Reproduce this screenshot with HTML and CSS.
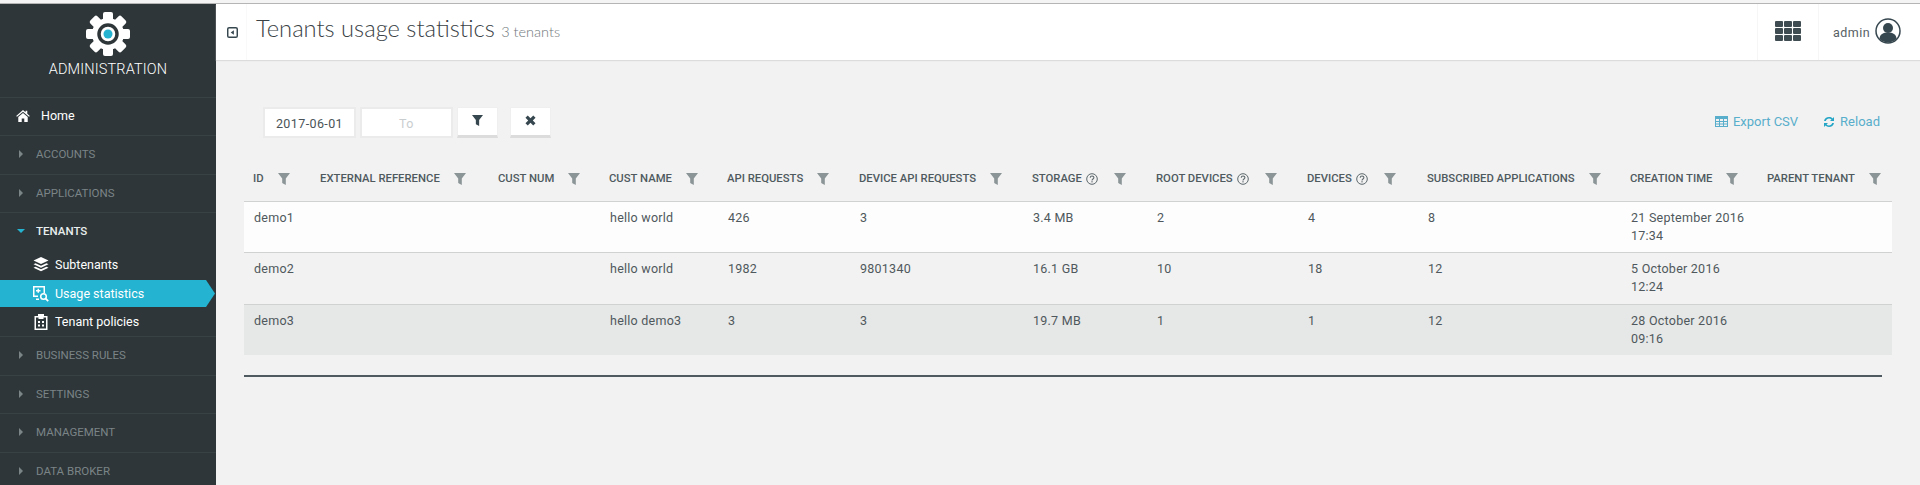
FILE: index.html
```html
<!DOCTYPE html>
<html lang="en">
<head>
    <meta charset="UTF-8">
    <title>Tenants usage statistics</title>
    <link rel="stylesheet" href="styles.css">
</head>
<body>
    <svg class="icon-defs" width="0" height="0">
        <symbol id="i-filter" viewBox="0 0 12 12"><path d="M0 0h12L7.800 5.500V12L4.200 10V5.500z"/></symbol>
        <symbol id="i-help" viewBox="0 0 12 12"><circle cx="6" cy="6" r="5.300" fill="none" stroke="currentColor"/><path d="M4.200 4.700C4.300 2.600 7.900 2.500 7.900 4.600C7.900 6 6 5.900 6 7.400" fill="none" stroke="currentColor" stroke-width="1.100"/><rect x="5.400" y="8.200" width="1.200" height="1.200"/></symbol>
        <symbol id="i-arrow" viewBox="0 0 6 8"><path d="M1 0l4 4-4 4z"/></symbol>
    </svg>
    <div class="top-strip"></div>
    <div class="app">
        <aside class="sidebar">
            <div class="brand">
                <svg class="brand-icon" viewBox="0 0 44 44">
                    <g fill="#fff">
                        <circle cx="22" cy="22" r="16"/>
                        <rect x="17" y="0" width="10" height="44" rx="2"/>
                        <rect x="17" y="0" width="10" height="44" rx="2" transform="rotate(45 22 22)"/>
                        <rect x="17" y="0" width="10" height="44" rx="2" transform="rotate(90 22 22)"/>
                        <rect x="17" y="0" width="10" height="44" rx="2" transform="rotate(135 22 22)"/>
                    </g>
                    <circle cx="22" cy="22" r="9" fill="#fff" stroke="#2e3639" stroke-width="3.500"/>
                    <circle cx="22" cy="22" r="4.500" fill="#24b3d0"/>
                </svg>
                <div class="brand-name">ADMINISTRATION</div>
            </div>
            <a class="nav-home">
                <svg class="nav-home-icon" viewBox="0 0 16 14"><path d="M8 0L0 7l1 1 7-6 7 6 1-1-3-2.600V1h-2v1.700zM2.500 8.200V14h4v-4h3v4h4V8.200L8 3.500z"/></svg>
                Home
            </a>
            <a class="nav-group"><svg class="arrow"><use href="#i-arrow"/></svg>ACCOUNTS</a>
            <a class="nav-group"><svg class="arrow"><use href="#i-arrow"/></svg>APPLICATIONS</a>
            <div class="nav-section">
                <a class="nav-group open"><svg class="arrow-down" viewBox="0 0 8 6"><path d="M0 1h8L4 5z"/></svg>TENANTS</a>
                <a class="nav-sub first">
                    <svg class="sub-icon" viewBox="0 0 16 16"><path d="M8 0l7.500 3.500L8 7 .5 3.500zM2.500 6.200L8 8.700l5.500-2.500 2 1L8 10.700.5 7.200zM2.500 9.700L8 12.200l5.500-2.500 2 1L8 14.200.5 10.700z"/></svg>
                    Subtenants
                </a>
                <a class="nav-sub active">
                    <svg class="sub-icon" viewBox="0 0 16 16"><path d="M0 0h12v7h-1.500V1.500h-9v8H5V11H0z"/><path d="M3 4h1.500V2.700H6V4h1.500v1.400H6v1.400H4.500V5.400H3z"/><circle cx="10.500" cy="10.500" r="2.800" fill="none" stroke="#fff" stroke-width="1.500"/><path d="M12.400 12.400l2.800 2.800" stroke="#fff" stroke-width="1.800"/><path d="M3 12.500h3v1.500H3z"/></svg>
                    Usage statistics
                </a>
                <a class="nav-sub">
                    <svg class="sub-icon" viewBox="0 0 16 16"><path fill-rule="evenodd" d="M1.500 2H5V0h6v2h3.500v14h-13zM3 3.500v11h10v-11h-2.500V5h-5V3.500z"/><path d="M5 7h2v2H5zM9 7h2v2H9zM5 10.500h2v2H5zM9 10.500h2v2H9z"/></svg>
                    Tenant policies
                </a>
            </div>
            <a class="nav-group"><svg class="arrow"><use href="#i-arrow"/></svg>BUSINESS RULES</a>
            <a class="nav-group"><svg class="arrow"><use href="#i-arrow"/></svg>SETTINGS</a>
            <a class="nav-group"><svg class="arrow"><use href="#i-arrow"/></svg>MANAGEMENT</a>
            <a class="nav-group"><svg class="arrow"><use href="#i-arrow"/></svg>DATA BROKER</a>
        </aside>

        <main class="content">
            <header class="page-header">
                <div class="toggle-cell">
                    <svg class="toggle-icon" viewBox="0 0 12 12"><rect x=".8" y=".8" width="10.400" height="10.400" rx="1.500" fill="none" stroke="#37474f" stroke-width="1.600"/><path d="M7.500 3.500v5L4 6z" fill="#37474f"/></svg>
                </div>
                <h1 class="page-title">Tenants usage statistics <small>3 tenants</small></h1>
                <div class="apps-cell">
                    <svg class="apps-icon" viewBox="0 0 26 20">
                        <rect width="8" height="6" rx="1"/><rect x="9" width="8" height="6" rx="1"/><rect x="18" width="8" height="6" rx="1"/>
                        <rect y="7" width="8" height="6" rx="1"/><rect x="9" y="7" width="8" height="6" rx="1"/><rect x="18" y="7" width="8" height="6" rx="1"/>
                        <rect y="14" width="8" height="6" rx="1"/><rect x="9" y="14" width="8" height="6" rx="1"/><rect x="18" y="14" width="8" height="6" rx="1"/>
                    </svg>
                </div>
                <div class="user-cell">
                    <span class="user-name">admin</span>
                    <svg class="avatar" viewBox="0 0 26 26">
                        <circle cx="13" cy="13" r="12" fill="#fff" stroke="#37474f" stroke-width="1.500"/>
                        <circle cx="13" cy="10" r="5" fill="#37474f"/>
                        <path d="M4.500 21c0-5 4-6.500 8.500-6.500s8.500 1.500 8.500 6.500c-4.500 4.500-12.500 4.500-17 0z" fill="#37474f"/>
                    </svg>
                </div>
            </header>

            <div class="toolbar">
                <div class="date-field">2017-06-01</div>
                <div class="date-field empty">To</div>
                <button class="tool-btn"><svg class="tool-icon"><use href="#i-filter"/></svg></button>
                <button class="tool-btn clear"><svg class="tool-icon" viewBox="0 0 12 12"><path d="M3 .5L6 3.500 9 .5 11.500 3 8.500 6 11.500 9 9 11.500 6 8.500 3 11.500 .5 9 3.500 6 .5 3z"/></svg></button>
                <div class="toolbar-links">
                    <a class="tool-link">
                        <svg class="link-icon" viewBox="0 0 13 11"><path fill-rule="evenodd" d="M0 0h13v11H0zM1 3v2h3V3zM5 3v2h3V3zM9 3v2h3V3zM1 6v1.500h3V6zM5 6v1.500h3V6zM9 6v1.500h3V6zM1 8.500V10h3V8.500zM5 8.500V10h3V8.500zM9 8.500V10h3V8.500z"/></svg>
                        Export CSV
                    </a>
                    <a class="tool-link">
                        <svg class="link-icon reload" viewBox="0 0 12 12"><path d="M1 5C1.500 2.500 3.500 1 6 1c1.500 0 2.700.5 3.500 1.400L11 1v4H7l1.500-1.500C7.900 3 7 2.600 6 2.600c-1.500 0-2.800 1-3.200 2.400zM11 7c-.5 2.500-2.500 4-5 4-1.500 0-2.700-.5-3.500-1.400L1 11V7h4L3.500 8.500C4.100 9 5 9.400 6 9.400c1.500 0 2.800-1 3.200-2.400z"/></svg>
                        Reload
                    </a>
                </div>
            </div>

            <table class="stats-table">
                <thead>
                    <tr>
                        <th><span class="th-inner"><span class="th-label">ID</span><svg class="th-filter"><use href="#i-filter"/></svg></span></th>
                        <th><span class="th-inner"><span class="th-label">EXTERNAL REFERENCE</span><svg class="th-filter"><use href="#i-filter"/></svg></span></th>
                        <th><span class="th-inner"><span class="th-label">CUST NUM</span><svg class="th-filter"><use href="#i-filter"/></svg></span></th>
                        <th><span class="th-inner"><span class="th-label">CUST NAME</span><svg class="th-filter"><use href="#i-filter"/></svg></span></th>
                        <th><span class="th-inner"><span class="th-label">API REQUESTS</span><svg class="th-filter"><use href="#i-filter"/></svg></span></th>
                        <th><span class="th-inner"><span class="th-label">DEVICE API REQUESTS</span><svg class="th-filter"><use href="#i-filter"/></svg></span></th>
                        <th><span class="th-inner"><span class="th-label">STORAGE</span><svg class="th-help"><use href="#i-help"/></svg><svg class="th-filter"><use href="#i-filter"/></svg></span></th>
                        <th><span class="th-inner"><span class="th-label">ROOT DEVICES</span><svg class="th-help"><use href="#i-help"/></svg><svg class="th-filter"><use href="#i-filter"/></svg></span></th>
                        <th><span class="th-inner"><span class="th-label">DEVICES</span><svg class="th-help"><use href="#i-help"/></svg><svg class="th-filter"><use href="#i-filter"/></svg></span></th>
                        <th><span class="th-inner"><span class="th-label">SUBSCRIBED APPLICATIONS</span><svg class="th-filter"><use href="#i-filter"/></svg></span></th>
                        <th><span class="th-inner"><span class="th-label">CREATION TIME</span><svg class="th-filter"><use href="#i-filter"/></svg></span></th>
                        <th><span class="th-inner"><span class="th-label">PARENT TENANT</span><svg class="th-filter"><use href="#i-filter"/></svg></span></th>
                    </tr>
                </thead>
                <tbody>
                    <tr class="row-white">
                        <td>demo1</td><td></td><td></td><td>hello world</td><td>426</td><td>3</td><td>3.4 MB</td><td>2</td><td>4</td><td>8</td><td>21 September 2016<br>17:34</td><td></td>
                    </tr>
                    <tr class="row-plain">
                        <td>demo2</td><td></td><td></td><td>hello world</td><td>1982</td><td>9801340</td><td>16.1 GB</td><td>10</td><td>18</td><td>12</td><td>5 October 2016<br>12:24</td><td></td>
                    </tr>
                    <tr class="row-grey">
                        <td>demo3</td><td></td><td></td><td>hello demo3</td><td>3</td><td>3</td><td>19.7 MB</td><td>1</td><td>1</td><td>12</td><td>28 October 2016<br>09:16</td><td></td>
                    </tr>
                </tbody>
            </table>
            <div class="table-rule"></div>
        </main>
    </div>
</body>
</html>
```

FILE: styles.css
```css
* {
    box-sizing: border-box;
}
html, body {
    margin: 0;
    height: 100%;
    overflow: hidden;
}
body {
    font-family: Roboto, "Liberation Sans", sans-serif;
    color: #4a5357;
    background-color: #f2f2f2;
}
.icon-defs {
    position: absolute;
}
.top-strip {
    height: 4px;
    background-color: #f4f4f4;
    border-bottom: 1px solid #b5b5b5;
}
.app {
    display: flex;
    height: 481px;
}

/* sidebar */
.sidebar {
    width: 216px;
    flex-shrink: 0;
    overflow: hidden;
    background-color: #2e3639;
}
.brand {
    height: 94px;
    padding-top: 8px;
    text-align: center;
    border-bottom: 1px solid #384144;
}
.brand-icon {
    display: block;
    width: 44px;
    height: 44px;
    margin: 0 auto;
}
.brand-name {
    margin-top: 5px;
    font-size: 14.500px;
    font-weight: 300;
    letter-spacing: .15px;
    color: #fff;
}
.nav-home {
    display: flex;
    align-items: center;
    height: 38px;
    padding-left: 16px;
    padding-bottom: 2px;
    font-size: 12.500px;
    color: #fff;
    border-bottom: 1px solid #384144;
}
.nav-home-icon {
    width: 14px;
    height: 12px;
    margin-right: 11px;
    fill: #fff;
}
.nav-group {
    display: flex;
    align-items: center;
    height: 38.500px;
    padding-left: 18px;
    padding-bottom: 1px;
    font-size: 11.500px;
    color: #7b8487;
    border-bottom: 1px solid #384144;
}
.arrow {
    width: 6px;
    height: 8px;
    margin-right: 12px;
    fill: #7b8487;
}
.arrow-down {
    width: 8px;
    height: 6px;
    margin-left: -1px;
    margin-right: 11px;
    fill: #24b3d0;
}
.nav-section {
    border-bottom: 1px solid #384144;
}
.nav-group.open {
    height: 37px;
    padding-bottom: 2px;
    font-weight: 500;
    color: #e8eeee;
    border-bottom: 0;
}
.nav-sub {
    display: flex;
    align-items: center;
    height: 29px;
    padding-left: 33px;
    font-size: 12.500px;
    color: #fff;
}
.nav-sub.first {
    height: 30px;
    padding-bottom: 1px;
}
.nav-sub.active {
    height: 27px;
    margin-right: 1px;
    background-color: #24b3d0;
    clip-path: polygon(0 0, 206px 0, 100% 50%, 206px 100%, 0 100%);
}
.sub-icon {
    width: 16px;
    height: 16px;
    margin-right: 6px;
    fill: #fff;
}

/* header */
.content {
    flex: 1;
    min-width: 0;
    padding-bottom: 20px;
}
.page-header {
    display: flex;
    align-items: stretch;
    height: 56px;
    background-color: #fff;
    box-shadow: 0 1px 1px #dcdcdc;
}
.toggle-cell {
    display: flex;
    align-items: center;
    width: 31px;
    padding-left: 11px;
    border-right: 1px solid #f9f9f9;
}
.toggle-icon {
    width: 11px;
    height: 11px;
}
.page-title {
    flex: 1;
    margin: 0;
    padding-left: 9px;
    font-family: Lato, Roboto, sans-serif;
    font-size: 23.700px;
    font-weight: 300;
    line-height: 48px;
    color: #3a4246;
}
.page-title small {
    font-size: 14.500px;
    font-weight: 300;
    color: #6f777a;
}
.apps-cell {
    display: flex;
    align-items: center;
    justify-content: center;
    width: 62px;
    padding-bottom: 3px;
    padding-right: 1px;
    border-left: 1px solid #f6f6f6;
    border-right: 1px solid #f6f6f6;
}
.apps-icon {
    width: 26px;
    height: 20px;
    fill: #3f4c52;
}
.user-cell {
    display: flex;
    align-items: center;
    width: 101px;
    padding-left: 14px;
    padding-bottom: 3px;
}
.user-name {
    width: 42px;
    padding-top: 4px;
    font-size: 12.500px;
    letter-spacing: .5px;
    color: #566064;
}
.avatar {
    width: 26px;
    height: 26px;
}

/* toolbar */
.toolbar {
    display: flex;
    align-items: flex-start;
    height: 95px;
    padding: 47px 40px 0 47px;
}
.date-field {
    width: 93px;
    height: 31px;
    margin-right: 4px;
    font-size: 12.500px;
    letter-spacing: .4px;
    line-height: 29px;
    text-align: center;
    color: #4a5357;
    background-color: #fff;
    border: 2px solid #ebebeb;
}
.date-field.empty {
    color: #c9cdcf;
}
.tool-btn {
    display: flex;
    align-items: center;
    justify-content: center;
    width: 41px;
    height: 31px;
    margin-right: 12px;
    padding: 0 0 3px;
    background-color: #fff;
    border: 1px solid #efefef;
    border-bottom: 3px solid #dcdcdc;
}
.tool-icon {
    width: 11px;
    height: 11px;
    fill: #37474f;
}
.toolbar-links {
    display: flex;
    gap: 25px;
    margin-left: auto;
    padding-top: 7px;
}
.tool-link {
    display: flex;
    align-items: center;
    font-size: 13px;
    color: #58aecb;
}
.link-icon {
    width: 13px;
    height: 11px;
    margin-right: 5px;
    fill: #58aecb;
}
.link-icon.reload {
    width: 12px;
    height: 12px;
    fill: #24a5c5;
}

/* table */
.stats-table {
    width: 1648px;
    margin-left: 28px;
    table-layout: fixed;
    border-collapse: collapse;
}
.stats-table th {
    height: 46px;
    padding: 2px 0 0 9px;
    text-align: left;
    vertical-align: middle;
}
.th-inner {
    display: flex;
    align-items: center;
    white-space: nowrap;
}
.th-label {
    font-size: 11.300px;
    font-weight: 500;
    color: #4f5a5f;
}
.th-filter {
    width: 12px;
    height: 12px;
    margin-left: 14px;
    fill: #8b9496;
}
.th-help {
    width: 12px;
    height: 12px;
    margin-left: 4px;
    margin-right: 2px;
    color: #5d676b;
    fill: #5d676b;
}
.stats-table th:nth-child(1) { width: 67px; }
.stats-table th:nth-child(2) { width: 178px; }
.stats-table th:nth-child(3) { width: 111px; }
.stats-table th:nth-child(4) { width: 118px; }
.stats-table th:nth-child(5) { width: 132px; }
.stats-table th:nth-child(6) { width: 173px; }
.stats-table th:nth-child(7) { width: 124px; }
.stats-table th:nth-child(8) { width: 151px; }
.stats-table th:nth-child(9) { width: 120px; }
.stats-table th:nth-child(10) { width: 203px; }
.stats-table th:nth-child(11) { width: 137px; }
.stats-table th:nth-child(12) { width: 134px; }
.stats-table td {
    height: 51px;
    padding: 7px 0 0 10px;
    font-size: 12.500px;
    line-height: 18px;
    letter-spacing: .25px;
    vertical-align: top;
    color: #4f585c;
    border-top: 1px solid #d0d2d2;
}
.row-white td {
    background-color: #fdfdfd;
}
.row-plain td {
    height: 52px;
}
.row-grey td {
    background-color: #e6e7e7;
}
.table-rule {
    width: 1638px;
    height: 2px;
    margin: 20px 0 0 28px;
    background-color: #4e5a60;
}
```
